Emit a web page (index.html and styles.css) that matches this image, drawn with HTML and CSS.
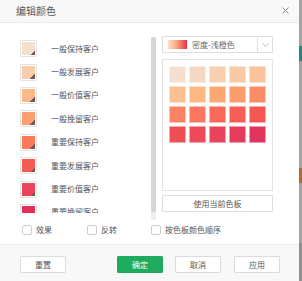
FILE: index.html
```html
<!DOCTYPE html>
<html>
<head>
<meta charset="utf-8">
<link rel="stylesheet" href="styles.css">
</head>
<body>
<div class="page">
  <div class="dialog">
    <div class="header">
      <span class="title">编辑颜色</span>
      <svg class="close" width="7" height="7" viewBox="0 0 7 7"><path d="M0.5 0.5L6.5 6.5M6.5 0.5L0.5 6.5" stroke="#8a8a8a" stroke-width="1" fill="none"/></svg>
    </div>
    <div class="body">
      <div class="main">
        <div class="left">
          <div class="list">
            <div class="row"><span class="sw"><i style="background:#f5dfcd"></i></span><span class="lbl">一般保持客户</span></div>
            <div class="row"><span class="sw"><i style="background:#f8cdab"></i></span><span class="lbl">一般发展客户</span></div>
            <div class="row"><span class="sw"><i style="background:#fbb98a"></i></span><span class="lbl">一般价值客户</span></div>
            <div class="row"><span class="sw"><i style="background:#fc9e70"></i></span><span class="lbl">一般挽留客户</span></div>
            <div class="row"><span class="sw"><i style="background:#fb7a5c"></i></span><span class="lbl">重要保持客户</span></div>
            <div class="row"><span class="sw"><i style="background:#f55a55"></i></span><span class="lbl">重要发展客户</span></div>
            <div class="row"><span class="sw"><i style="background:#e9445a"></i></span><span class="lbl">重要价值客户</span></div>
            <div class="row"><span class="sw"><i style="background:#e2305a"></i></span><span class="lbl">重要挽留客户</span></div>
          </div>
          <div class="scroll"><div class="thumb"></div></div>
        </div>
        <div class="right">
          <div class="select">
            <span class="grad"></span>
            <span class="sel-text">密度-浅橙色</span>
            <span class="arrow"><svg width="7" height="4" viewBox="0 0 7 4"><path d="M0.5 0.5L3.5 3.5L6.5 0.5" stroke="#aaa" stroke-width="0.8" fill="none"/></svg></span>
          </div>
          <div class="gridbox">
            <div class="grid">
              <span style="background:#f5e0d0"></span><span style="background:#f6d8c0"></span><span style="background:#f8d0b1"></span><span style="background:#f9c8a5"></span><span style="background:#fac39a"></span>
              <span style="background:#fcbf91"></span><span style="background:#fdb883"></span><span style="background:#fca875"></span><span style="background:#fc9b6c"></span><span style="background:#fb8c67"></span>
              <span style="background:#fc8264"></span><span style="background:#fb7760"></span><span style="background:#f96a59"></span><span style="background:#f75f55"></span><span style="background:#f45752"></span>
              <span style="background:#f04e57"></span><span style="background:#ee4a58"></span><span style="background:#e9435a"></span><span style="background:#e63b5b"></span><span style="background:#e2345c"></span>
            </div>
          </div>
          <div class="use-btn">使用当前色板</div>
        </div>
      </div>
      <div class="checks">
        <label class="chk c1"><span class="box"></span>效果</label>
        <label class="chk c2"><span class="box"></span>反转</label>
        <label class="chk c3"><span class="box"></span>按色板颜色顺序</label>
      </div>
    </div>
    <div class="footer">
      <div class="btn reset">重置</div>
      <div class="btn primary">确定</div>
      <div class="btn cancel">取消</div>
      <div class="btn apply">应用</div>
    </div>
  </div>
  <div class="strip">
    <div class="s-gap1"></div>
    <div class="s-teal"></div>
    <div class="s-gap2"></div>
    <div class="s-orange"></div>
    <div class="s-gap3"></div>
    <div class="s-dark"></div>
  </div>
</div>
</body>
</html>
```

FILE: styles.css
```css
* { box-sizing: border-box; }
html, body { margin: 0; padding: 0; }
body {
  font-family: "Noto Sans CJK SC", "Noto Sans", sans-serif;
  color: #555;
  background: #a0a0a0;
}
.page { display: flex; width: 302px; height: 281px; overflow: hidden; }
.dialog {
  width: 299px;
  height: 281px;
  background: #fff;
  display: flex;
  flex-direction: column;
}
.header {
  height: 23px;
  flex: none;
  background: #f8f8f8;
  border-bottom: 1px solid #e9e9e9;
  display: flex;
  align-items: center;
  justify-content: space-between;
  padding: 0 10px 0 16px;
}
.title { font-size: 10px; color: #555; line-height: 1; }
.close { display: block; margin-top: -1px; }
.body { flex: 1; display: flex; flex-direction: column; padding-top: 13px; }
.main { display: flex; height: 184px; }
.left { width: 156px; display: flex; padding-top: 1px; }
.list { width: 151px; height: 176px; overflow: hidden; padding: 3px 0 0 20px; }
.row { display: flex; align-items: center; height: 23.4px; }
.row:first-child { margin-top: -3px; }
.sw {
  width: 17px; height: 17px;
  border: 1px solid #e3e3e3;
  border-radius: 1px;
  padding: 1px;
  background: #fff;
  flex: none;
  display: block;
}
.sw i {
  display: block; width: 13px; height: 13px; position: relative;
}
.sw i::after {
  content: ""; position: absolute; right: 0; bottom: 0;
  width: 5px; height: 5px;
  background: linear-gradient(to bottom right, transparent 50%, #765850 50%);
}
.lbl { font-size: 8px; margin-left: 14px; color: #555; line-height: 1; }
.scroll { width: 5px; height: 183px; background: #eeeeee; border-radius: 2px; }
.thumb { height: 175px; background: #d5d5d5; border-radius: 2px; }
.right { width: 111px; margin-left: 6px; display: flex; flex-direction: column; }
.select {
  height: 17px; border: 1px solid #dedede; display: flex; align-items: center;
}
.grad {
  width: 19px; height: 9px; margin-left: 5px;
  background: linear-gradient(to right, #fde0c8, #f7a77f 45%, #e8304c);
}
.sel-text { font-size: 8px; margin-left: 5px; flex: 1; color: #666; line-height: 1; }
.arrow {
  width: 15px; height: 100%; border-left: 1px solid #dedede;
  display: flex; align-items: center; justify-content: center;
}
.gridbox {
  margin-top: 6px; height: 132px; border: 1px solid #e3e3e3; padding: 6px 0 0 6px;
}
.grid { display: grid; grid-template-columns: repeat(5, 17px); grid-auto-rows: 17px; gap: 3px; }
.grid span { display: block; border: 1px solid rgba(255,255,255,0.5); }
.use-btn {
  margin-top: 4px; height: 17px; border: 1px solid #dedede;
  font-size: 8px; display: flex; align-items: center; justify-content: center; color: #555;
}
.checks { display: flex; align-items: center; height: 14px; margin-top: 3px; }
.chk { display: flex; align-items: center; font-size: 8px; color: #555; line-height: 1; }
.box {
  width: 10px; height: 10px; border: 1px solid #cfcfcf; border-radius: 2px; margin-right: 4px; background: #fff;
}
.c1 { margin-left: 22px; }
.c2 { margin-left: 35px; }
.c3 { margin-left: 34px; }
.footer {
  height: 37px; flex: none; background: #f8f8f8; border-top: 1px solid #efefef;
  display: flex; align-items: flex-start; padding: 11px 0 0 20px;
}
.btn {
  width: 46px; height: 17px; border: 1px solid #dcdcdc; background: #fff; border-radius: 1px;
  font-size: 8px; display: flex; align-items: center; justify-content: center; color: #555;
}
.btn.primary { background: #1fab5d; border-color: #1fab5d; color: #fff; margin-left: 51px; }
.btn.cancel { margin-left: 12px; }
.btn.apply { margin-left: 13px; }
.strip { width: 3px; display: flex; flex-direction: column; background: #a3a3a3; }
.s-gap1 { height: 46px; }
.s-teal { height: 15px; background: #1f8a80; }
.s-gap2 { height: 107px; }
.s-orange { height: 15px; background: #b4692c; }
.s-gap3 { height: 60px; }
.s-dark { flex: 1; background: #8f8f8f; }
```
